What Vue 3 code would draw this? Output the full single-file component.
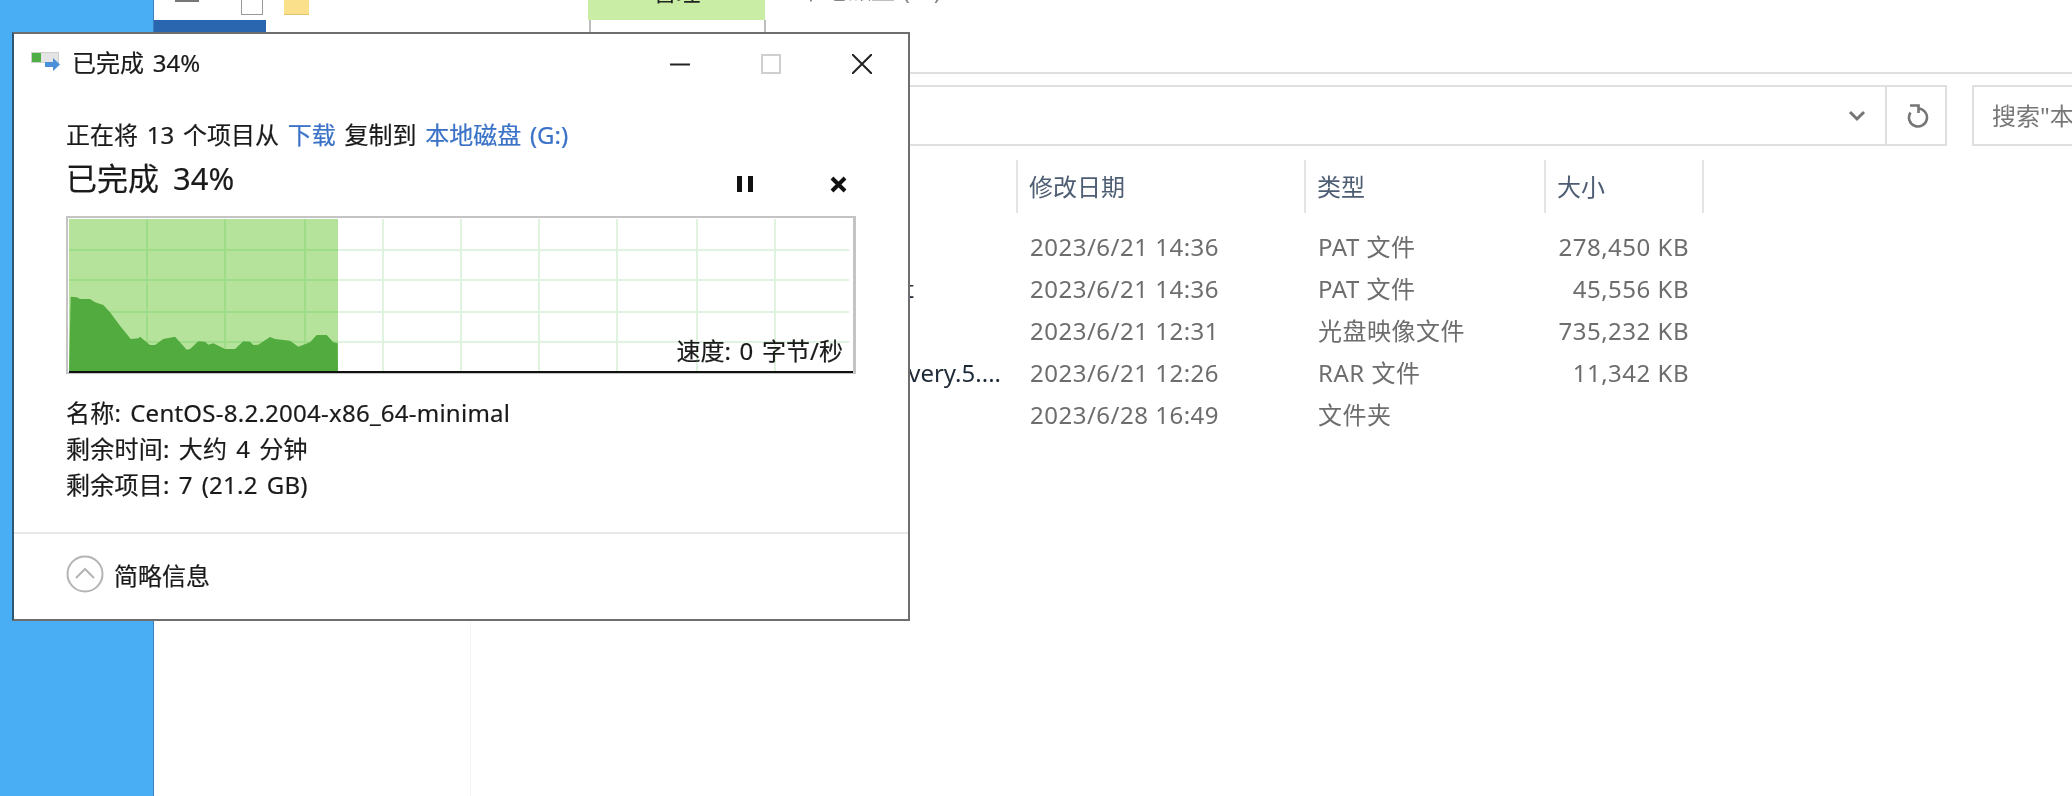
<template>
  <div class="desktop">
    <!-- blue desktop strip on the left -->
    <div class="wallpaper"></div>

    <!-- explorer window behind the dialog -->
    <div class="explorer">
      <div class="ribbon">
        <div class="qat">
          <span class="qat-gray"></span>
          <span class="qat-page"></span>
          <span class="qat-folder"></span>
          <div class="context-tab"><span>管理</span></div>
          <div class="win-title"><span>本地磁盘 (G:)</span></div>
        </div>
        <div class="tabs">
          <div class="file-tab"></div>
          <div class="open-tab"></div>
        </div>
      </div>

      <div class="address-row">
        <div class="address">
          <svg class="chevron" width="18" height="12" viewBox="0 0 18 12">
            <path d="M2 2l7 7 7-7" fill="none" stroke="#767676" stroke-width="3" />
          </svg>
          <div class="refresh">
            <svg width="22" height="24" viewBox="0 0 22 24">
              <path d="M11 4.500a9 9 0 1 1-7.500 4" fill="none" stroke="#767676" stroke-width="2.600" />
              <path d="M3 1.500h8.500v7.500" fill="none" stroke="#767676" stroke-width="2.600" />
            </svg>
          </div>
        </div>
        <div class="search">搜索"本地磁盘 (G:)"</div>
      </div>

      <div class="files">
        <div class="file-head">
          <div class="head-spacer"></div>
          <div v-for="col in columns" :key="col" class="head-cell">{{ col }}</div>
        </div>
        <div v-for="row in rows" :key="row.date" class="file-row">
          <div class="name-cell" :class="row.nameClass">{{ row.name }}</div>
          <div class="cell">{{ row.date }}</div>
          <div class="cell">{{ row.type }}</div>
          <div class="cell size">{{ row.size }}</div>
        </div>
      </div>
    </div>

    <!-- copy progress dialog -->
    <div class="dialog">
      <div class="titlebar">
        <svg class="app-icon" width="30" height="22" viewBox="0 0 30 22">
          <rect x="0.5" y="2.500" width="27" height="10" fill="#e4e4e4" stroke="#cfcfcf" />
          <rect x="1" y="3" width="9" height="9" fill="#4fae45" />
          <path d="M14 12h8V8l7 6.500-7 6.500v-4h-8z" fill="#4a8fd8" />
        </svg>
        <span class="title-text">已完成 34%</span>
        <div class="win-controls">
          <svg width="20" height="20" viewBox="0 0 20 20"><path d="M0 10.500h20" stroke="#222" stroke-width="2" /></svg>
          <svg width="20" height="20" viewBox="0 0 20 20"><rect x="1" y="1" width="18" height="18" fill="none" stroke="#cfcfcf" stroke-width="2" /></svg>
          <svg width="20" height="20" viewBox="0 0 20 20"><path d="M0 0l20 20M20 0L0 20" stroke="#222" stroke-width="2" /></svg>
        </div>
      </div>

      <div class="body">
        <div class="copy-line">
          正在将 13 个项目从 <span class="link">下载</span> 复制到 <span class="link">本地磁盘 (G:)</span>
        </div>
        <div class="progress-head">
          <span class="percent">已完成 34%</span>
          <div class="progress-actions">
            <svg width="16" height="16" viewBox="0 0 16 16"><path d="M0 0h5v16H0zM11 0h5v16h-5z" fill="#111" /></svg>
            <svg width="17" height="17" viewBox="0 0 17 17"><path d="M2 2l13 13M15 2L2 15" stroke="#111" stroke-width="4" /></svg>
          </div>
        </div>

        <div class="chart">
          <svg width="790" height="158" viewBox="0 0 790 158">
            <rect x="3" y="3" width="269" height="153" fill="#b5e39b" />
            <path v-for="x in gridX" :key="'x' + x" :d="`M${x} 3V156`" stroke="#dff3e0" stroke-width="2" />
            <path v-for="y in gridY" :key="'y' + y" :d="`M3 ${y}H783`" stroke="#dff3e0" stroke-width="2" />
            <path v-for="x in gridX.filter((v) => v < 272)" :key="'gx' + x" :d="`M${x} 3V156`" stroke="#9fdc88" stroke-width="2" />
            <path v-for="y in gridY" :key="'gy' + y" :d="`M3 ${y}H272`" stroke="#9fdc88" stroke-width="2" />
            <polygon :points="speedShape" fill="#52ab3e" />
            <path d="M3 156H787" stroke="#111" stroke-width="2" />
          </svg>
          <span class="speed">速度: 0 字节/秒</span>
        </div>

        <div class="info">
          <div>名称: CentOS-8.2.2004-x86_64-minimal</div>
          <div>剩余时间: 大约 4 分钟</div>
          <div>剩余项目: 7 (21.2 GB)</div>
        </div>
      </div>

      <div class="footer">
        <svg width="38" height="38" viewBox="0 0 38 38">
          <circle cx="19" cy="19" r="17.500" fill="none" stroke="#b4b4b4" stroke-width="2" />
          <path d="M10 23l9-9 9 9" fill="none" stroke="#b4b4b4" stroke-width="2" />
        </svg>
        <span>简略信息</span>
      </div>
    </div>
  </div>
</template>

<script setup>
const columns = ['修改日期', '类型', '大小']

const rows = [
  { name: '', date: '2023/6/21 14:36', type: 'PAT 文件', size: '278,450 KB' },
  { name: 't', nameClass: 'tail-short', date: '2023/6/21 14:36', type: 'PAT 文件', size: '45,556 KB' },
  { name: '', date: '2023/6/21 12:31', type: '光盘映像文件', size: '735,232 KB' },
  { name: 'very.5....', nameClass: 'tail-long', date: '2023/6/21 12:26', type: 'RAR 文件', size: '11,342 KB' },
  { name: '', date: '2023/6/28 16:49', type: '文件夹', size: '' }
]

// grid lines of the speed chart, relative to the chart box
const gridX = [81, 159, 239, 317, 395, 473, 551, 631, 709]
const gridY = [34, 64, 96, 126]

// speed curve traced at 3x from the reference
const curve = [
  [92, 293], [110, 295], [120, 300], [150, 300], [165, 310], [190, 318], [210, 340], [240, 380],
  [272, 420], [295, 418], [300, 413], [330, 438], [345, 438], [370, 420], [405, 413], [440, 452],
  [450, 450], [475, 427], [495, 428], [505, 437], [520, 433], [555, 450], [585, 450], [610, 427],
  [630, 428], [640, 438], [655, 437], [690, 414], [705, 420], [750, 425], [775, 443], [810, 430],
  [830, 408], [860, 408], [880, 430], [893, 433]
]
const speedShape = [
  '3,156',
  ...curve.map(([x, y]) => `${(x / 3 - 26).toFixed(1)},${(y / 3 - 17).toFixed(1)}`),
  '272,156'
].join(' ')
</script>

<style scoped>
.desktop {
  position: relative;
  display: flex;
  width: 2072px;
  height: 796px;
  overflow: hidden;
  background: #4aaef5;
  font-family: "Noto Sans", "Noto Sans CJK SC", sans-serif;
  font-size: 24px;
  word-spacing: 1.5px;
  filter: blur(0.45px);
}
.wallpaper {
  width: 153px;
  flex: none;
}
.explorer {
  flex: 1;
  min-width: 0;
  background: #fff;
  border-left: 1px solid #3d7fb8;
}

/* ribbon, only its lower edge shows above the dialog */
.ribbon {
  height: 74px;
  border-bottom: 2px solid #dfdfdf;
  box-sizing: border-box;
  overflow: hidden;
}
.qat {
  position: relative;
  display: flex;
  height: 20px;
  overflow: hidden;
}
.qat-gray {
  width: 24px;
  height: 2px;
  margin-left: 21px;
  background: #777;
}
.qat-page {
  width: 22px;
  height: 15px;
  margin-left: 42px;
  background: #fff;
  border: 1px solid #999;
  border-top: 0;
  box-sizing: border-box;
}
.qat-folder {
  width: 25px;
  height: 15px;
  margin-left: 21px;
  background: #fbe08c;
  border-bottom: 1px solid #e2c36c;
  box-sizing: border-box;
}
.context-tab {
  width: 177px;
  height: 20px;
  margin-left: 279px;
  background: #c9eda4;
  text-align: center;
  color: #222;
}
.context-tab span,
.win-title span {
  display: block;
  line-height: 24px;
  margin-top: -20px;
}
.win-title {
  margin-left: 34px;
  color: #888;
}
.win-title span {
  margin-top: -22px;
}
.tabs {
  display: flex;
}
.file-tab {
  width: 112px;
  height: 40px;
  background: #2a66b0;
}
.open-tab {
  width: 177px;
  height: 53px;
  margin-left: 323px;
  border: solid #bdbdbd;
  border-width: 0 2px;
  box-sizing: border-box;
}

/* address bar and search */
.address-row {
  display: flex;
  gap: 25px;
  margin-top: 11px;
  height: 61px;
}
.address {
  display: flex;
  align-items: center;
  justify-content: flex-end;
  width: 1793px;
  border: 2px solid #dfdfdf;
  border-left: 0;
  box-sizing: border-box;
}
.chevron {
  margin-right: 19px;
}
.refresh {
  display: flex;
  align-items: center;
  justify-content: center;
  width: 60px;
  height: 100%;
  padding-left: 3px;
  box-sizing: border-box;
  border-left: 2px solid #dfdfdf;
}
.search {
  flex: 1;
  padding-left: 18px;
  line-height: 57px;
  border: 2px solid #dfdfdf;
  border-right: 0;
  color: #777;
  white-space: nowrap;
  overflow: hidden;
}

/* details list */
.files {
  padding-top: 14px;
  margin-left: 316px;
  border-left: 1px solid #f4f4f4;
  height: 650px;
  box-sizing: border-box;
}
.file-head,
.file-row {
  display: grid;
  grid-template-columns: 545px 288px 240px 160px;
}
.file-head {
  height: 53px;
  margin-bottom: 13px;
}
.head-cell {
  padding-left: 11px;
  line-height: 53px;
  border-left: 2px solid #e4e4e4;
  color: #4d5d73;
}
.head-cell:last-child {
  border-right: 2px solid #e4e4e4;
}
.file-row {
  height: 42px;
  line-height: 42px;
  color: #6d6d6d;
  white-space: nowrap;
}
.name-cell {
  text-align: right;
  color: #1f2a38;
}
.tail-short {
  padding-right: 102px;
}
.tail-long {
  padding-right: 15px;
}
.cell {
  padding-left: 14px;
  letter-spacing: 0.5px;
  word-spacing: 0;
}
.size {
  padding: 0 15px 0 0;
  text-align: right;
}

/* copy dialog */
.dialog {
  position: absolute;
  left: 12px;
  top: 32px;
  width: 898px;
  height: 589px;
  background: #fff;
  border: 2px solid #6e6e6e;
  border-left-color: #33566f;
  box-sizing: border-box;
  color: #1a1a1a;
  word-spacing: 2.500px;
  -webkit-text-stroke: 0.2px currentColor;
}
.titlebar {
  display: flex;
  align-items: center;
  height: 54px;
  padding: 0 36px 0 17px;
}
.app-icon {
  margin-right: 11px;
}
.win-controls {
  display: flex;
  gap: 71px;
  margin-top: 6px;
  margin-left: auto;
}
.body {
  width: 790px;
  padding: 29px 0 0 52px;
}
.copy-line {
  height: 36px;
  line-height: 36px;
  white-space: nowrap;
}
.link {
  color: #3a72c8;
}
.progress-head {
  display: flex;
  align-items: center;
  height: 46px;
  margin-bottom: 17px;
  padding-right: 9px;
}
.percent {
  font-size: 31px;
  word-spacing: 6px;
}
.progress-actions {
  display: flex;
  align-items: center;
  gap: 77px;
  margin-top: 16px;
  margin-left: auto;
}
.chart {
  position: relative;
  height: 158px;
  width: 790px;
  border: solid #c4c4c4;
  border-width: 2px 3px 2px 2px;
  margin-bottom: 21px;
  box-sizing: border-box;
}
.chart svg {
  display: block;
  margin: -2px 0 0 -2px;
}
.speed {
  position: absolute;
  right: 10px;
  top: 115px;
  line-height: 36px;
  white-space: nowrap;
}
.info {
  line-height: 36px;
  letter-spacing: 0.25px;
  white-space: nowrap;
}
.footer {
  display: flex;
  align-items: center;
  gap: 10px;
  height: 80px;
  margin-top: 29px;
  padding-left: 52px;
  border-top: 2px solid #e8e8e8;
}
</style>
